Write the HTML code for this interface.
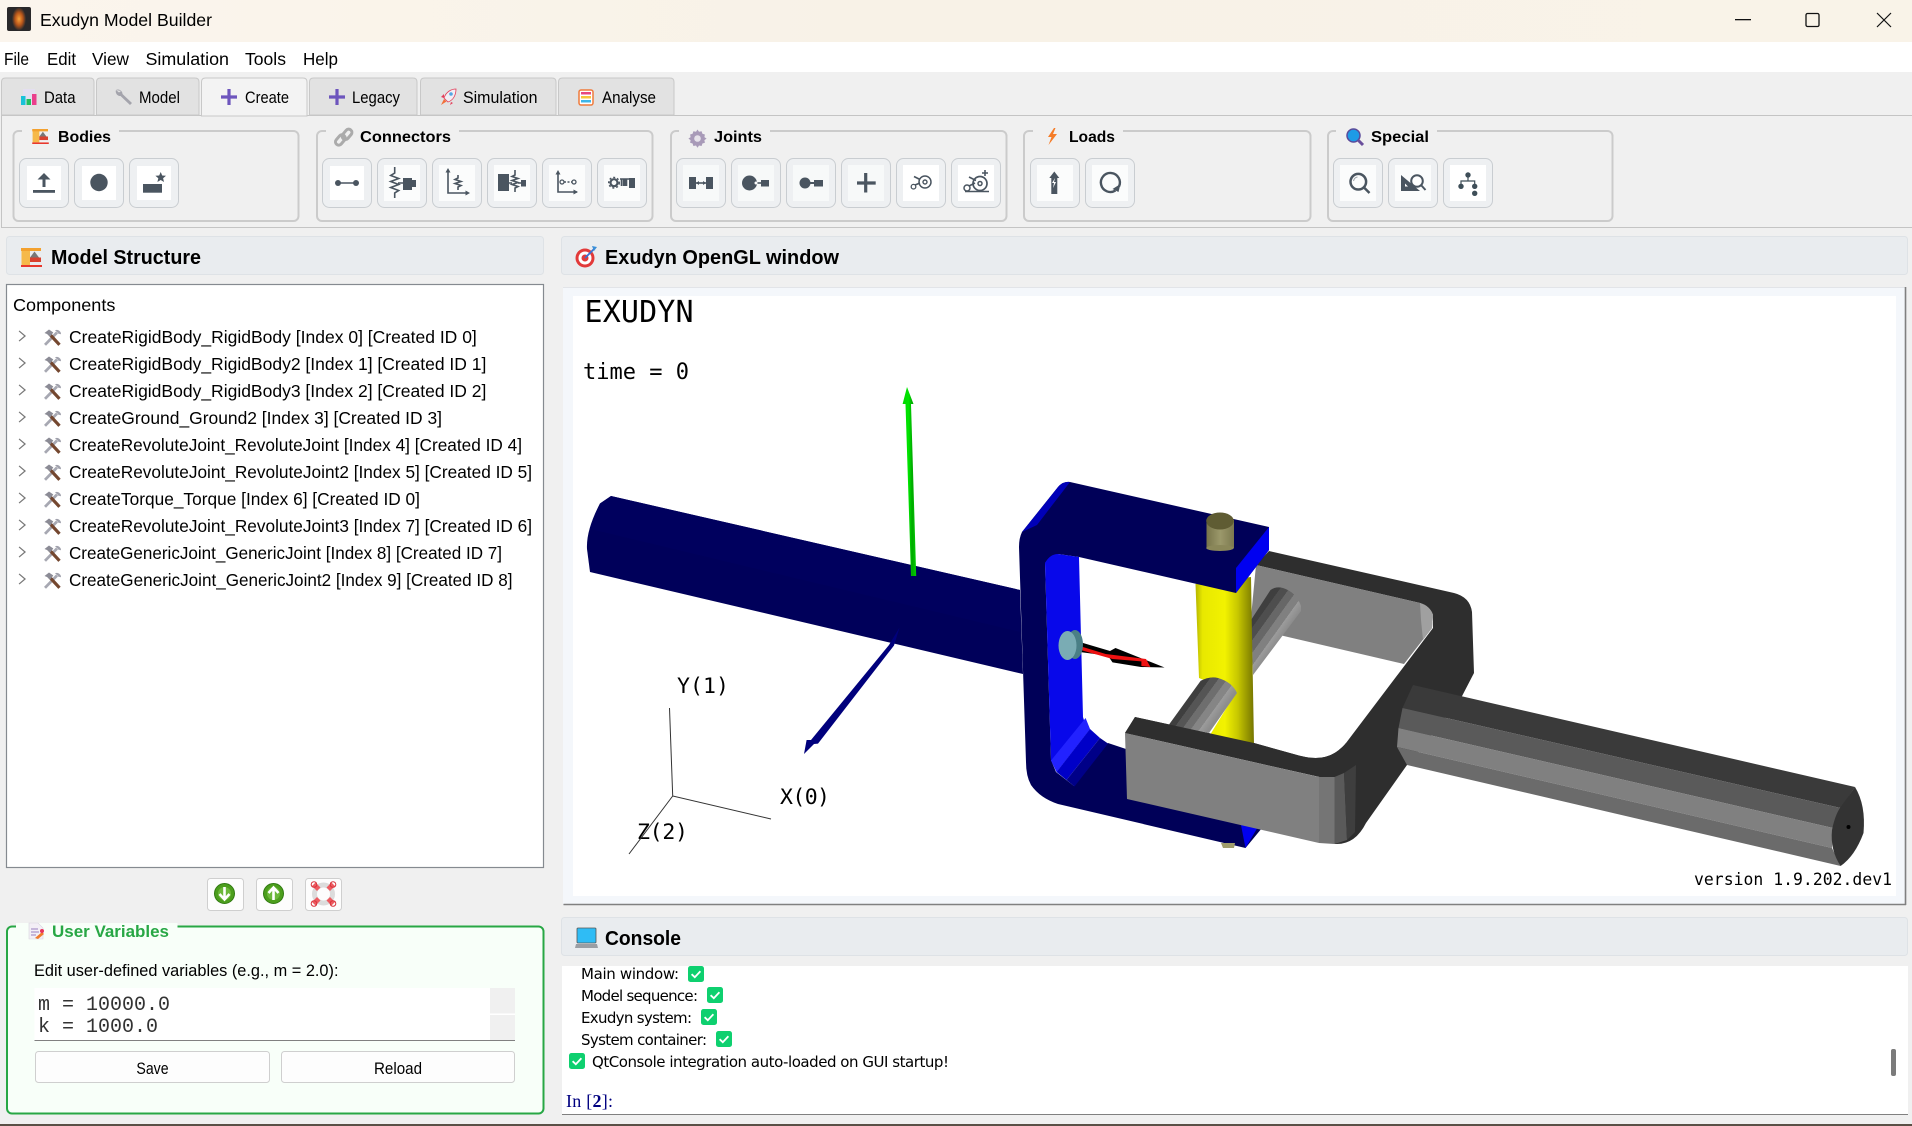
<!DOCTYPE html>
<html lang="en"><head><meta charset="utf-8"><title>Exudyn Model Builder</title>
<style>
html,body{margin:0;padding:0;background:#f0f0f0;overflow:hidden}
svg{display:block}
text{font-family:"Liberation Sans",Arial,sans-serif;fill:#000}
.mono{font-family:"DejaVu Sans Mono",monospace}
.dj{font-family:"DejaVu Sans",sans-serif}
.b{fill:#eef0f2;stroke:#c9cdd1;stroke-width:1}
.g{fill:#f0f0f0;stroke:#cbcbcb;stroke-width:2}
.t{fill:#e2e2e2;stroke:#c8c8c8}
.i{fill:#4a5560;stroke:none}
.l{fill:none;stroke:#4a5560;stroke-width:1.6}
.hd{fill:#e9ecef;stroke:#dee2e6}
.pb{fill:#fdfdfd;stroke:#cfcfcf}
</style></head><body>
<svg xmlns="http://www.w3.org/2000/svg" width="1912" height="1126" viewBox="0 0 1912 1126">
<defs>
<linearGradient id="tb" x1="0" x2="1" y1="0" y2="0"><stop offset="0" stop-color="#fbf5ed"/><stop offset=".45" stop-color="#f8f2e7"/><stop offset="1" stop-color="#f9f3e8"/></linearGradient>
<radialGradient id="fire"><stop offset="0" stop-color="#f9a23a"/><stop offset=".55" stop-color="#b8561a"/><stop offset="1" stop-color="#2b2a2c"/></radialGradient>
<linearGradient id="yel" x1="0" x2="1" y1="0" y2="0"><stop offset="0" stop-color="#b4b400"/><stop offset=".12" stop-color="#e8e800"/><stop offset=".5" stop-color="#f2f200"/><stop offset=".72" stop-color="#c8c800"/><stop offset="1" stop-color="#757500"/></linearGradient>
<linearGradient id="cyu" gradientUnits="userSpaceOnUse" x1="1270" y1="590" x2="1300" y2="611.500"><stop offset="0" stop-color="#3f3f3f"/><stop offset=".2" stop-color="#3f3f3f"/><stop offset=".2" stop-color="#4e4e4e"/><stop offset=".4" stop-color="#4e4e4e"/><stop offset=".4" stop-color="#676767"/><stop offset=".6" stop-color="#676767"/><stop offset=".6" stop-color="#808080"/><stop offset=".8" stop-color="#808080"/><stop offset=".8" stop-color="#9c9c9c"/><stop offset="1" stop-color="#8c8c8c"/></linearGradient>
<linearGradient id="cyl" gradientUnits="userSpaceOnUse" x1="1200" y1="680" x2="1229" y2="701"><stop offset="0" stop-color="#3f3f3f"/><stop offset=".2" stop-color="#3f3f3f"/><stop offset=".2" stop-color="#555"/><stop offset=".4" stop-color="#555"/><stop offset=".4" stop-color="#6e6e6e"/><stop offset=".6" stop-color="#6e6e6e"/><stop offset=".6" stop-color="#858585"/><stop offset=".8" stop-color="#858585"/><stop offset=".8" stop-color="#9c9c9c"/><stop offset="1" stop-color="#8c8c8c"/></linearGradient>
<linearGradient id="pin" x1="0" x2="1" y1="0" y2="0"><stop offset="0" stop-color="#77744a"/><stop offset=".5" stop-color="#9b986a"/><stop offset="1" stop-color="#7c7950"/></linearGradient>
<linearGradient id="gr" x1="0" x2="1" y1="0" y2="0"><stop offset="0" stop-color="#00d800"/><stop offset=".45" stop-color="#00e400"/><stop offset=".7" stop-color="#00a800"/><stop offset="1" stop-color="#00d000"/></linearGradient>
<symbol id="tools" viewBox="0 0 18 17" overflow="visible">
<path d="M1.500 15.800L13.500 3.500" stroke="#a7a8b2" stroke-width="2.800" fill="none"/>
<path d="M11.500 1.300a4.200 4.200 0 0 1 6 3.900l-2.700-.6-1-1.300z" fill="#a0a1ac"/>
<path d="M6 5L16 15.800" stroke="#74472f" stroke-width="3.200" fill="none"/>
<path d="M1 4L5.500 .5 9.800 3.500 6.500 7.800 3.500 5z" fill="#8b8b95"/>
</symbol>
<symbol id="crane" viewBox="0 0 21 19" overflow="visible">
<rect x=".5" y="0" width="8.500" height="17" fill="#f6b94a"/>
<rect x="0" y="0" width="20" height="3" fill="#f3a12f"/>
<path d="M9 9.500L13.500 3.500 18 9.500z" fill="#777"/><path d="M9 9.500h11v4.500H9z" fill="#d8412f"/>
<rect x="0" y="17" width="21" height="2" fill="#e8382d"/>
</symbol>
<symbol id="chev" viewBox="0 0 8 12" overflow="visible"><path d="M.6 .6L7 6 .6 11.400" fill="none" stroke="#777" stroke-width="1.300"/></symbol>
<symbol id="ck" viewBox="0 0 16 16"><rect width="16" height="16" rx="2.500" fill="#0ed06f"/><path d="M3.600 8.200L6.800 11.200 12.400 5.200" fill="none" stroke="#fff" stroke-width="1.800"/></symbol>
</defs>

<!-- title bar -->
<rect width="1912" height="42" fill="url(#tb)"/>
<rect x="7" y="7" width="24" height="24" rx="2" fill="#29282a"/>
<ellipse cx="19" cy="19" rx="7" ry="11.500" fill="url(#fire)"/>
<text x="40" y="26" font-size="17.500" textLength="172" lengthAdjust="spacingAndGlyphs">Exudyn Model Builder</text>
<rect x="1735" y="19" width="16" height="1.300" fill="#111"/>
<rect x="1806" y="13.500" width="13" height="13" rx="1.500" fill="none" stroke="#111" stroke-width="1.300"/>
<path d="M1877 13L1891 27M1891 13L1877 27" stroke="#111" stroke-width="1.200"/>

<!-- menu bar -->
<rect y="42" width="1912" height="30" fill="#fff"/>
<g font-size="17.500">
<text x="4" y="65" textLength="25" lengthAdjust="spacingAndGlyphs">File</text>
<text x="47" y="65" textLength="29" lengthAdjust="spacingAndGlyphs">Edit</text>
<text x="92" y="65" textLength="37" lengthAdjust="spacingAndGlyphs">View</text>
<text x="145.500" y="65" textLength="83.500" lengthAdjust="spacingAndGlyphs">Simulation</text>
<text x="245" y="65" textLength="41" lengthAdjust="spacingAndGlyphs">Tools</text>
<text x="303" y="65" textLength="35" lengthAdjust="spacingAndGlyphs">Help</text>
</g>

<!-- tabs -->
<rect x="1.500" y="115.500" width="1920" height="112" fill="#f0f0f0" stroke="#c4c4c4"/>
<path class="t" d="M1.500 115V82q0-4 4-4H90q4 0 4 4v33z"/>
<path class="t" d="M96.500 115V82q0-4 4-4H195q4 0 4 4v33z"/>
<path d="M201.500 116V82q0-4 4-4H303q4 0 4 4v34z" fill="#f3f3f3" stroke="#c8c8c8"/>
<path class="t" d="M309.500 115V82q0-4 4-4H413q4 0 4 4v33z"/>
<path class="t" d="M420.500 115V82q0-4 4-4H552q4 0 4 4v33z"/>
<path class="t" d="M558.500 115V82q0-4 4-4H670q4 0 4 4v33z"/>
<g font-size="16.500">
<text x="44" y="103" textLength="31.500" lengthAdjust="spacingAndGlyphs">Data</text>
<text x="139" y="103" textLength="41" lengthAdjust="spacingAndGlyphs">Model</text>
<text x="245" y="103" textLength="44" lengthAdjust="spacingAndGlyphs">Create</text>
<text x="352" y="103" textLength="48" lengthAdjust="spacingAndGlyphs">Legacy</text>
<text x="463" y="103" textLength="74.500" lengthAdjust="spacingAndGlyphs">Simulation</text>
<text x="602" y="103" textLength="54" lengthAdjust="spacingAndGlyphs">Analyse</text>
</g>
<!-- tab icons -->
<rect x="23" y="89" width="12" height="16" fill="#e4dff0"/>
<rect x="21" y="96" width="4.500" height="9" fill="#19c2d8"/><rect x="26.500" y="99" width="4.500" height="6" fill="#22c05e"/><rect x="32" y="94" width="4.500" height="11" fill="#ea3f8c"/>
<path d="M116 90a4.500 4.500 0 0 1 6.500 4L132 103l-2 2-9.500-9a4.500 4.500 0 0 1-4.500-6l3 2.500 2-1.500z" fill="#a4a4ac"/>
<path d="M229 89v16M221 97h16" stroke="#6d55bd" stroke-width="3.200"/>
<path d="M337 89v16M329 97h16" stroke="#6d55bd" stroke-width="3.200"/>
<path d="M456 89c-5 0-10 3-12 9l4 4c6-2 8-8 8-13z" fill="#f1eef4" stroke="#e33c58" stroke-width=".800"/><circle cx="451" cy="94" r="1.800" fill="#53a7e4"/><path d="M441 105l3-6 2.500 2.500z" fill="#f2703a"/><path d="M444 94l-3 3 3 1zM451 102l-1 3 3-2z" fill="#e33c58"/>
<rect x="579" y="90" width="14" height="15" rx="2" fill="#fff" stroke="#ef7a3b" stroke-width="1.500"/><rect x="581" y="92" width="10" height="2.500" fill="#e8487d"/><rect x="581" y="96" width="10" height="2.500" fill="#f7c43a"/><rect x="581" y="100" width="10" height="2.500" fill="#3fb6e8"/>

<!-- group boxes -->
<rect class="g" x="13.500" y="131" width="285" height="90" rx="5"/>
<rect class="g" x="317" y="131" width="335.500" height="90" rx="5"/>
<rect class="g" x="671" y="131" width="335.500" height="90" rx="5"/>
<rect class="g" x="1024" y="131" width="286.500" height="90" rx="5"/>
<rect class="g" x="1328" y="131" width="284.500" height="90" rx="5"/>
<g fill="#f0f0f0"><rect x="22" y="125" width="97" height="10"/><rect x="326" y="125" width="133" height="10"/><rect x="679" y="125" width="91" height="10"/><rect x="1033" y="125" width="90" height="10"/><rect x="1336" y="125" width="101" height="10"/></g>
<g font-size="16" font-weight="bold">
<text x="58" y="142" textLength="53" lengthAdjust="spacingAndGlyphs">Bodies</text>
<text x="360" y="142" textLength="91" lengthAdjust="spacingAndGlyphs">Connectors</text>
<text x="714" y="142" textLength="48" lengthAdjust="spacingAndGlyphs">Joints</text>
<text x="1069" y="142" textLength="46" lengthAdjust="spacingAndGlyphs">Loads</text>
<text x="1371" y="142" textLength="58" lengthAdjust="spacingAndGlyphs">Special</text>
</g>
<use href="#crane" x="32" y="129" width="17" height="15"/>
<g fill="none" stroke="#ababab" stroke-width="3"><rect x="337" y="134" width="6.500" height="11.500" rx="3.200" transform="rotate(40 340 140)"/><rect x="344" y="128.500" width="6.500" height="11.500" rx="3.200" transform="rotate(40 347 134)"/></g>
<path d="M697.500 129.500l1.500 2.200 2.600-.5.800 2.500 2.500.8-.5 2.600 2.200 1.500-2.200 1.500.5 2.600-2.500.8-.8 2.500-2.600-.5-1.500 2.200-1.500-2.200-2.600.5-.8-2.500-2.500-.8.5-2.600-2.200-1.500 2.200-1.500-.5-2.600 2.500-.8.8-2.500 2.600.5z" fill="#a89ab8"/><circle cx="697.500" cy="138.500" r="3.300" fill="#e6e2ea"/>
<path d="M1054 128l-6 9h3.500l-3 8 8.500-11h-4l2.500-6z" fill="#f57c28"/>
<circle cx="1353.500" cy="135.500" r="6.500" fill="#1d9be6" stroke="#5a4a9a" stroke-width="1.500"/><path d="M1358 140l5 5" stroke="#6a4f9c" stroke-width="3"/>

<!-- toolbar buttons -->
<g id="btns">
<rect class="b" x="19.500" y="158.500" width="49" height="49" rx="7"/><rect class="b" x="74.500" y="158.500" width="49" height="49" rx="7"/><rect class="b" x="129.500" y="158.500" width="49" height="49" rx="7"/>
<rect class="b" x="322.500" y="158.500" width="49" height="49" rx="7"/><rect class="b" x="377.500" y="158.500" width="49" height="49" rx="7"/><rect class="b" x="432.500" y="158.500" width="49" height="49" rx="7"/><rect class="b" x="487.500" y="158.500" width="49" height="49" rx="7"/><rect class="b" x="542.500" y="158.500" width="49" height="49" rx="7"/><rect class="b" x="597.500" y="158.500" width="49" height="49" rx="7"/>
<rect class="b" x="676.500" y="158.500" width="49" height="49" rx="7"/><rect class="b" x="731.500" y="158.500" width="49" height="49" rx="7"/><rect class="b" x="786.500" y="158.500" width="49" height="49" rx="7"/><rect class="b" x="841.500" y="158.500" width="49" height="49" rx="7"/><rect class="b" x="896.500" y="158.500" width="49" height="49" rx="7"/><rect class="b" x="951.500" y="158.500" width="49" height="49" rx="7"/>
<rect class="b" x="1030.500" y="158.500" width="49" height="49" rx="7"/><rect class="b" x="1085.500" y="158.500" width="49" height="49" rx="7"/>
<rect class="b" x="1333.500" y="158.500" width="49" height="49" rx="7"/><rect class="b" x="1388.500" y="158.500" width="49" height="49" rx="7"/><rect class="b" x="1443.500" y="158.500" width="49" height="49" rx="7"/>
</g>
<g fill="#fff">
<rect x="27" y="166" width="34" height="34"/><rect x="82" y="166" width="34" height="34"/><rect x="137" y="166" width="34" height="34"/>
<rect x="330" y="166" width="34" height="34"/>
<g fill="#fbfcfc"><rect x="384" y="165" width="36" height="36"/><rect x="439" y="165" width="36" height="36"/><rect x="494" y="165" width="36" height="36"/><rect x="549" y="165" width="36" height="36"/><rect x="604" y="165" width="36" height="36"/></g>
<g fill="#f7f9f9"><rect x="683" y="165" width="36" height="36"/><rect x="738" y="165" width="36" height="36"/><rect x="793" y="165" width="36" height="36"/><rect x="848" y="165" width="36" height="36"/></g>
<rect x="903" y="165" width="36" height="36"/><rect x="958" y="165" width="36" height="36"/>
<g fill="#fbfcfc"><rect x="1037" y="165" width="36" height="36"/><rect x="1092" y="165" width="36" height="36"/><rect x="1340" y="165" width="36" height="36"/><rect x="1395" y="165" width="36" height="36"/></g>
<rect x="1450" y="165" width="36" height="36"/>
</g>
<!-- toolbar icons: bodies -->
<path class="i" d="M44 173l6.500 6.500H45.500V187h-3v-7.500H37.500z"/><rect class="i" x="33" y="190" width="22" height="2.800"/>
<circle class="i" cx="99" cy="182.500" r="8.700"/>
<rect class="i" x="143" y="184" width="19" height="8.700"/>
<path class="i" d="M160.700 172l1.500 3.500 3.800.3-2.900 2.500.9 3.700-3.300-2-3.300 2 .9-3.700-2.900-2.500 3.800-.3z"/>
<!-- connectors -->
<path class="l" d="M338 183h18"/><circle class="i" cx="338" cy="183" r="3"/><circle class="i" cx="356" cy="183" r="3"/>
<path class="l" stroke-width="2" d="M394.700 167v6l-4 2.500 8 3-8 3 8 3-8 3 8 3-4 2.500v5M398 183h6"/><rect class="i" x="403" y="178" width="9" height="12"/><rect class="i" x="411" y="180" width="5" height="7"/>
<path class="l" stroke-width="1.800" d="M448 171v22h20M458 175v3l-3 1.500 6 2-6 2 6 2-3 1.500v3"/><path class="i" d="M448 168l2.500 4.500h-5zM470 193l-4.500 2.500v-5z"/>
<rect class="i" x="498" y="174" width="11" height="17"/><path class="l" d="M515 170v5l-3 1.500 6 2-6 2 6 2-6 2 6 2-3 1.500v4M509 183h3M518 183h3"/><rect class="i" x="521" y="180" width="5" height="6.500"/>
<path class="l" d="M558 173v19h19"/><path class="i" d="M558 170l2.500 4.500h-5zM578 192l-4.500 2.500v-5z"/><circle cx="562" cy="182" r="2" fill="none" stroke="#4a5560" stroke-width="1.300"/><circle cx="574" cy="182" r="2" fill="none" stroke="#4a5560" stroke-width="1.300"/><path class="l" stroke-width="1.200" stroke-dasharray="2 1.500" d="M564 182h8"/>
<circle cx="614" cy="182.700" r="3.500" fill="none" stroke="#4a5560" stroke-width="2.200"/><circle cx="614" cy="182.700" r="5.300" fill="none" stroke="#4a5560" stroke-width="1.400" stroke-dasharray="2 2"/><path class="l" stroke-width="1.300" d="M620 179h1.500v7M623.500 186v-7h1.500v7M626.500 179v7M620 179h9"/><rect class="i" x="629" y="178" width="6" height="10"/>
<!-- joints -->
<rect class="i" x="689" y="177" width="7" height="12"/><rect class="i" x="706" y="177" width="7" height="12"/><path class="l" stroke-width="1.200" d="M696 183h10"/><path class="i" d="M696 183l3-2v4zM706 183l-3-2v4z"/>
<circle class="i" cx="749.500" cy="183" r="7.500"/><rect class="i" x="761" y="180" width="8" height="6.500"/><path class="l" stroke-width="1.200" d="M754 183h7"/><circle cx="756" cy="183" r="1.500" fill="#fff"/>
<circle class="i" cx="805" cy="183" r="5.500"/><rect class="i" x="814" y="180" width="9" height="6.500"/><rect class="i" x="809" y="182" width="6" height="2"/>
<path d="M865.700 173v19.500M857 183h18.700" stroke="#4a5560" stroke-width="3.200" fill="none"/>
<circle cx="925" cy="182" r="6" fill="none" stroke="#4a5560" stroke-width="1.500"/><circle cx="925" cy="182" r="2" fill="none" stroke="#4a5560" stroke-width="1.400"/><circle cx="913.500" cy="186.700" r="2.300" fill="none" stroke="#4a5560" stroke-width="1.300"/><path class="l" stroke-width="1.300" d="M914 176.500l6 3M915 185l5-2"/>
<circle cx="980" cy="183.500" r="7" fill="none" stroke="#4a5560" stroke-width="1.700"/><circle cx="980" cy="183.500" r="2" fill="none" stroke="#4a5560" stroke-width="1.500"/><circle cx="967" cy="188" r="3" fill="none" stroke="#4a5560" stroke-width="1.500"/><path class="l" d="M965 191.500h24M969 177l7 3.500M969 186l6-3M985 170v6M982 173h6"/>
<!-- loads -->
<path class="i" d="M1054.300 171.500l5 6.500h-2v16h-6v-16h-2z"/><path d="M1055 178l-3 5h2l-1 5 3-6h-2z" fill="#fff"/>
<path d="M1115.500 190.500a9.500 9.500 0 1 1 3.500-4" fill="none" stroke="#4a5560" stroke-width="2.400"/><path class="i" d="M1120.500 184l-2 8-6-3z"/>
<!-- special -->
<circle cx="1358.300" cy="181.700" r="7.800" fill="none" stroke="#4a5560" stroke-width="2.500"/><path d="M1364 187.500l5.500 5.500" stroke="#4a5560" stroke-width="2.500"/><path d="M1353.500 181a5 5 0 0 1 4-4" fill="none" stroke="#9aa2a8" stroke-width="1"/>
<path class="i" d="M1401 175v16h19z"/><path d="M1405 186.500v-3l3 3z" fill="#fff"/><circle cx="1417" cy="181" r="5.800" fill="#fff" stroke="#4a5560" stroke-width="2"/><path d="M1421 185l4.500 5" stroke="#4a5560" stroke-width="2"/>
<circle cx="1468" cy="175" r="2.700" fill="#3e4e58"/><circle cx="1461" cy="186.300" r="2.700" fill="#3e4e58"/><circle cx="1474.700" cy="186.300" r="2.700" fill="#3e4e58"/><circle cx="1474.700" cy="193.300" r="2.700" fill="#3e4e58"/><path d="M1468 177v4M1461 185v-4h13.700v4" fill="none" stroke="#3e4e58" stroke-width="1.200"/>

<!-- model structure -->
<rect class="hd" x="6.500" y="236.500" width="537" height="38" rx="3"/>
<use href="#crane" x="21" y="248" width="21" height="19"/>
<text x="51" y="264" font-size="20" font-weight="bold" textLength="150" lengthAdjust="spacingAndGlyphs">Model Structure</text>
<rect x="6.500" y="284.500" width="537" height="583" fill="#fff" stroke="#858a90" stroke-width="1.200"/>
<text x="13" y="311" font-size="17.500" textLength="102.400" lengthAdjust="spacingAndGlyphs">Components</text>
<g font-size="17.500" fill="#111">
<use href="#chev" x="18.500" y="330" width="7.500" height="12"/><use href="#tools" x="43.500" y="329" width="18" height="17"/><text x="69" y="343" textLength="407.800" lengthAdjust="spacingAndGlyphs">CreateRigidBody_RigidBody [Index 0] [Created ID 0]</text>
<use href="#chev" x="18.500" y="357" width="7.500" height="12"/><use href="#tools" x="43.500" y="356" width="18" height="17"/><text x="69" y="370" textLength="417.400" lengthAdjust="spacingAndGlyphs">CreateRigidBody_RigidBody2 [Index 1] [Created ID 1]</text>
<use href="#chev" x="18.500" y="384" width="7.500" height="12"/><use href="#tools" x="43.500" y="383" width="18" height="17"/><text x="69" y="397" textLength="417.400" lengthAdjust="spacingAndGlyphs">CreateRigidBody_RigidBody3 [Index 2] [Created ID 2]</text>
<use href="#chev" x="18.500" y="411" width="7.500" height="12"/><use href="#tools" x="43.500" y="410" width="18" height="17"/><text x="69" y="424" textLength="373" lengthAdjust="spacingAndGlyphs">CreateGround_Ground2 [Index 3] [Created ID 3]</text>
<use href="#chev" x="18.500" y="438" width="7.500" height="12"/><use href="#tools" x="43.500" y="437" width="18" height="17"/><text x="69" y="451" textLength="453" lengthAdjust="spacingAndGlyphs">CreateRevoluteJoint_RevoluteJoint [Index 4] [Created ID 4]</text>
<use href="#chev" x="18.500" y="465" width="7.500" height="12"/><use href="#tools" x="43.500" y="464" width="18" height="17"/><text x="69" y="478" textLength="463" lengthAdjust="spacingAndGlyphs">CreateRevoluteJoint_RevoluteJoint2 [Index 5] [Created ID 5]</text>
<use href="#chev" x="18.500" y="492" width="7.500" height="12"/><use href="#tools" x="43.500" y="491" width="18" height="17"/><text x="69" y="505" textLength="351" lengthAdjust="spacingAndGlyphs">CreateTorque_Torque [Index 6] [Created ID 0]</text>
<use href="#chev" x="18.500" y="519" width="7.500" height="12"/><use href="#tools" x="43.500" y="518" width="18" height="17"/><text x="69" y="532" textLength="463" lengthAdjust="spacingAndGlyphs">CreateRevoluteJoint_RevoluteJoint3 [Index 7] [Created ID 6]</text>
<use href="#chev" x="18.500" y="546" width="7.500" height="12"/><use href="#tools" x="43.500" y="545" width="18" height="17"/><text x="69" y="559" textLength="433" lengthAdjust="spacingAndGlyphs">CreateGenericJoint_GenericJoint [Index 8] [Created ID 7]</text>
<use href="#chev" x="18.500" y="573" width="7.500" height="12"/><use href="#tools" x="43.500" y="572" width="18" height="17"/><text x="69" y="586" textLength="443.500" lengthAdjust="spacingAndGlyphs">CreateGenericJoint_GenericJoint2 [Index 9] [Created ID 8]</text>
</g>

<!-- tree buttons -->
<rect class="pb" x="207.500" y="878.500" width="36" height="32" rx="3"/><rect class="pb" x="256.500" y="878.500" width="36" height="32" rx="3"/><rect class="pb" x="305.500" y="878.500" width="36" height="32" rx="3"/>
<circle cx="224.500" cy="893.500" r="10" fill="#4c9e1d" stroke="#2f7a10"/><circle cx="224.500" cy="893.500" r="6.500" fill="#6cb83a"/><path d="M224.500 887v12M219.500 894l5 5.500 5-5.500" fill="none" stroke="#fff" stroke-width="2.600"/>
<circle cx="273.500" cy="893.500" r="10" fill="#4c9e1d" stroke="#2f7a10"/><circle cx="273.500" cy="893.500" r="6.500" fill="#6cb83a"/><path d="M273.500 900v-12M268.500 893l5-5.500 5 5.500" fill="none" stroke="#fff" stroke-width="2.600"/>
<circle cx="323.500" cy="894" r="9" fill="none" stroke="#dcdcdc" stroke-width="5"/>
<g fill="#ee5a60"><path d="M312 886l3.500-3.500 5 5-3.500 3.500zM335 886l-3.500-3.500-5 5 3.500 3.500zM312 902l3.500 3.500 5-5-3.500-3.500zM335 902l-3.500 3.500-5-5 3.500-3.500z"/></g>
<g fill="none" stroke="#d8343c" stroke-width="1"><circle cx="314" cy="884.500" r="2.800"/><circle cx="333" cy="884.500" r="2.800"/><circle cx="314" cy="903.500" r="2.800"/><circle cx="333" cy="903.500" r="2.800"/></g>

<!-- user variables -->
<rect x="7" y="926.500" width="536.500" height="187" rx="5" fill="#f8fff9" stroke="#28a745" stroke-width="2"/>
<rect x="16" y="923" width="161.500" height="17" fill="#f8fff9"/>
<path d="M29 923h9l5 5v11H29z" fill="#f3eff6" stroke="#d8d4de" stroke-width=".600"/><path d="M31 929h7M31 932h8M31 935h5" stroke="#9a7fc0" stroke-width="1.100"/><path d="M35 938l7-6 2 2-6 5z" fill="#f07a2c"/><circle cx="42" cy="931" r="2" fill="#e8345c"/>
<text x="52" y="937" font-size="16.500" font-weight="bold" style="fill:#28a745" textLength="117" lengthAdjust="spacingAndGlyphs">User Variables</text>
<text x="34" y="976" font-size="16.500" textLength="304.500" lengthAdjust="spacingAndGlyphs">Edit user-defined variables (e.g., m = 2.0):</text>
<rect x="34.500" y="988" width="480.500" height="52" fill="#fff"/>
<rect x="490" y="988" width="25" height="25.500" fill="#f0f0f0"/><rect x="490" y="1015" width="25" height="25" fill="#f0f0f0"/>
<rect x="34.500" y="1040" width="480.500" height="1" fill="#808080"/>
<text x="38" y="1010" font-size="20" style="font-family:'Liberation Mono',monospace;fill:#333">m = 10000.0</text>
<text x="38" y="1032" font-size="20" style="font-family:'Liberation Mono',monospace;fill:#333">k = 1000.0</text>
<rect class="pb" x="35.500" y="1051.500" width="234" height="31" rx="3"/><rect class="pb" x="281.500" y="1051.500" width="233" height="31" rx="3"/>
<text x="136.400" y="1074" font-size="16.500" textLength="32.200" lengthAdjust="spacingAndGlyphs">Save</text>
<text x="374" y="1074" font-size="16.500" textLength="48" lengthAdjust="spacingAndGlyphs">Reload</text>

<!-- OpenGL header -->
<rect class="hd" x="561.500" y="236.500" width="1346" height="38" rx="3"/>
<circle cx="585" cy="258" r="9.500" fill="#e23a3a"/><circle cx="585" cy="258" r="6.500" fill="#fff"/><circle cx="585" cy="258" r="3.500" fill="#e23a3a"/><path d="M585 258l9-9" stroke="#3a6fd0" stroke-width="1.800"/><path d="M592 246l5 1-3 4z" fill="#3a8fd8"/>
<text x="605" y="264" font-size="20" font-weight="bold" textLength="234" lengthAdjust="spacingAndGlyphs">Exudyn OpenGL window</text>

<!-- OpenGL view -->
<rect x="563" y="287" width="1343" height="618" fill="#f4f7fb"/>
<path d="M563 287.500H1906V904.500H563" fill="none" stroke="#e2e4e8"/>
<path d="M563.500 904.500H1906M1905.500 287V905" fill="none" stroke="#808080" stroke-width="1.600"/>
<rect x="573" y="296" width="1323" height="600" fill="#fff"/>
<text class="mono" x="584.500" y="322" font-size="30" textLength="109">EXUDYN</text>
<text class="mono" x="583" y="379" font-size="22" textLength="106">time = 0</text>
<text class="mono" x="1694" y="885" font-size="16.400" textLength="198">version 1.9.202.dev1</text>
<text class="mono" x="677" y="693" font-size="21.500" textLength="52">Y(1)</text>
<text class="mono" x="780" y="804" font-size="21.500" textLength="50">X(0)</text>
<text class="mono" x="637" y="839" font-size="21.500" textLength="51">Z(2)</text>
<path d="M669.500 708L672.700 796L771 819M672.700 796L629 854" fill="none" stroke="#333" stroke-width="1"/>

<!-- blue shaft -->
<path d="M611 496L600 503.500Q586 530 587 549L590 572 1023 674 1020 590z" fill="#00005a"/>
<path d="M611 496L600 503.500Q592 520 590 529L1020 632 1020 590z" fill="#00005e"/>
<!-- green and dark-blue arrows -->
<path d="M907 387L913.500 404 911 404 916.200 576 911 576 905.500 404 902.600 404z" fill="url(#gr)"/>
<path d="M804 754L806.600 740 811 740 889 645 899.500 627.600 894 645.500 818 743.600 814 744z" fill="#00007c"/>

<!-- gray frame, back layer -->
<path d="M1269 551L1454 593Q1470 597 1472 612L1474 673 1460 700 1407 765 1366 823Q1355 845 1335 844L1320 777 1125 733 1135 717 1254 743 1297 755C1312 759 1330 762 1346 743L1433 628 1433 615Q1430 606 1420 603L1256 565z" fill="#2e2e2e"/>
<path d="M1256 565L1420 603Q1430 606 1433 615L1432 628 1404 664 1288 637 1250 628z" fill="#808080"/>
<path d="M1420 603Q1430 606 1433 615L1432 628 1423 640 1421 620z" fill="#a0a0a0"/>
<!-- gray shaft -->
<path d="M1413 685L1855 787 1840.600 808 1402.500 708z" fill="#3a3a3a"/>
<path d="M1402.500 708L1840.600 808 1833 828 1398.500 728z" fill="#5a5a5a"/>
<path d="M1398.500 728L1833 828 1832 848 1397 747z" fill="#808080"/>
<path d="M1397 747L1832 848 1840.600 866 1407 765z" fill="#6b6b6b"/>
<path d="M1855 787Q1866 805 1863.500 833 1855 856 1840.600 866 1830 850 1832 830 1835 815 1840.600 807z" fill="#333"/>
<circle cx="1848.500" cy="827" r="2" fill="#000"/>
<!-- upper gray cylinder -->
<path d="M1270.500 590Q1276 586 1283 588 1296 592 1301 606L1301 611 1253 675 1251 620z" fill="url(#cyu)"/>
<!-- yellow cylinder -->
<path d="M1195.500 584L1251 577 1254 745 1210.600 734 1235.600 693 1199 678z" fill="url(#yel)"/>
<!-- lower gray cylinder -->
<path d="M1200.700 680.700Q1210 676 1218 678 1232 682 1237 693L1209 733 1168.700 725z" fill="url(#cyl)"/>
<!-- front band -->
<path d="M1135 717L1125 733 1320 777 1343 772 1346 743C1330 762 1312 759 1297 755L1254 743z" fill="#2e2e2e"/>
<!-- blue frame -->
<path d="M1070 482L1269 527 1269 550 1236 593 1079 557 1058 554 1045 563 1051 760 1056 772 1074 786 1108 743 1135 752 1250 790 1262 828 1245.500 848 1058 804Q1040 798 1031 785 1026 776 1026 762L1019 547Q1019 538 1022 532L1058 487Q1063 481 1070 482z" fill="#000058"/>
<path d="M1022 532L1058 487Q1063 481 1070 482L1037 525z" fill="#0000b8"/>
<path d="M1045 563Q1050 554 1058 554L1079 557 1083 717 1087 730 1090 729 1056.600 772 1051 760z" fill="#0808ea"/>
<path d="M1085.600 718L1090 729 1056.600 772 1051 760.500z" fill="#2222ff"/>
<path d="M1090 729L1100 738 1066.500 780 1056.600 772z" fill="#0000c8"/>
<path d="M1100 738L1108 743.500 1074.500 786.500 1066.500 780z" fill="#000088"/>
<path d="M1269 527L1269 550 1236 593 1236 568z" fill="#0000f0"/>
<path d="M1245.500 848L1262 820 1240 820z" fill="#0000f0"/>
<path d="M1221 843h14l-1 5h-11z" fill="#a09d6c"/>
<!-- gray front face -->
<path d="M1125 733L1319 777 1319 843 1127 799z" fill="#808080"/>
<path d="M1319 777L1334.500 777 1334.500 844 1319 843z" fill="#757575"/>
<path d="M1334.500 777L1344 773 1347 840 1334.500 844z" fill="#5a5a5a"/>
<path d="M1344 773L1356 765 1355 832 1347 840z" fill="#3e3e3e"/>
<!-- pin on top -->
<rect x="1206.500" y="520" width="27.500" height="28" fill="url(#pin)"/>
<ellipse cx="1220" cy="548" rx="13.800" ry="3" fill="#8a8759"/>
<ellipse cx="1220" cy="521" rx="13.800" ry="8.500" fill="#5f5c33"/>
<!-- torque indicator -->
<path d="M1078 641.500L1110 651 1115.500 648 1164.600 667.500 1141 667 1112.500 662.400 1108 655.700 1077 651.600z" fill="#000"/>
<path d="M1078 645.500L1105.700 654 1146 659 1150.400 667 1141.400 666 1141.400 661.400 1112.500 659 1077 649z" fill="#ee1111"/>
<ellipse cx="1075" cy="644.500" rx="8" ry="14.500" fill="#4a7f86"/>
<ellipse cx="1067.500" cy="645.500" rx="9" ry="14.500" fill="#7aacb4"/>

<!-- console -->
<rect class="hd" x="561.500" y="917.500" width="1346" height="38" rx="3"/>
<rect x="577" y="928" width="19" height="15" rx="1" fill="#2fbcf5" stroke="#555" stroke-width=".800"/><path d="M576 944h21l1 4h-23z" fill="#9a9ea4"/>
<text x="605" y="945" font-size="20" font-weight="bold" textLength="76" lengthAdjust="spacingAndGlyphs">Console</text>
<rect x="562" y="966" width="1346" height="148" fill="#fff"/>
<rect x="562" y="1114" width="1346" height="1" fill="#808080"/>
<rect x="1891" y="1049" width="5" height="27" rx="2" fill="#7b7b7b"/>
<g font-size="15" fill="#111" class="dj">
<text class="dj" x="581" y="979" font-size="15" textLength="98">Main window:</text>
<text class="dj" x="581" y="1001" font-size="15" textLength="117">Model sequence:</text>
<text class="dj" x="581" y="1023" font-size="15" textLength="111">Exudyn system:</text>
<text class="dj" x="581" y="1045" font-size="15" textLength="126">System container:</text>
<text class="dj" x="592" y="1067" font-size="15" textLength="357">QtConsole integration auto-loaded on GUI startup!</text>
</g>
<use href="#ck" x="688" y="966" width="16" height="16"/><use href="#ck" x="707" y="987" width="16" height="16"/><use href="#ck" x="701" y="1009" width="16" height="16"/><use href="#ck" x="716" y="1031" width="16" height="16"/><use href="#ck" x="569" y="1053" width="16" height="16"/>
<text x="566" y="1107" font-size="18" textLength="47" style="font-family:'Liberation Serif',serif;fill:#000080">In [<tspan font-weight="bold">2</tspan>]:</text>

<!-- desktop strip -->
<rect y="1124" width="1912" height="2" fill="#5a5046"/>
</svg>
</body></html>
